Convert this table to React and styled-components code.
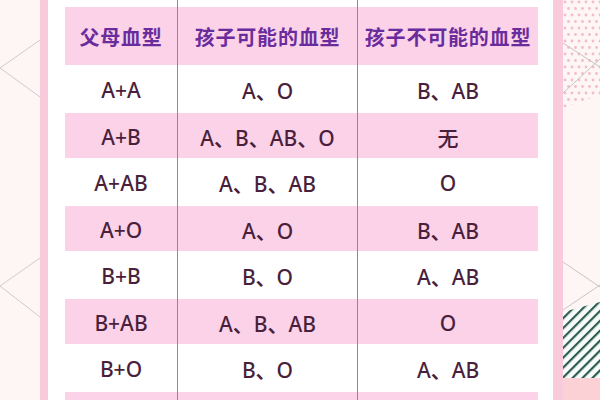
import React from "react";
import styled, { createGlobalStyle } from "styled-components";

const Global = createGlobalStyle`
  html, body { margin: 0; padding: 0; width: 600px; height: 400px; overflow: hidden; background: #fdf6f5; }
  #root { width: 600px; height: 400px; }
`;

const Page = styled.div`
  display: flex;
  width: 600px;
  height: 400px;
  overflow: hidden;
  background: #fdf6f5;
  font-family: "Noto Sans", "Noto Sans CJK SC", sans-serif;
`;

const Side = styled.div`
  flex: 0 0 ${(p) => p.$w}px;
  height: 400px;
  display: flex;
`;

const Stripe = styled.div`
  flex: 0 0 ${(p) => p.$w}px;
  background: #f9c9dc;
`;

const Panel = styled.div`
  flex: 1;
  background: #ffffff;
  padding: 0 15px 0 17px;
  overflow: hidden;
`;

const Grid = styled.div`
  display: grid;
  grid-template-columns: 112px 180px 181px;
  grid-auto-rows: auto;
`;

const Cell = styled.div`
  height: ${(p) => p.$h}px;
  display: flex;
  align-items: center;
  justify-content: center;
  background: ${(p) => (p.$pink ? "#fbd2e8" : "#ffffff")};
  border-left: ${(p) => (p.$col > 0 ? "1.5px solid #918a8d" : "none")};
  color: ${(p) => (p.$head ? "#6a2c9c" : "#4a1f3c")};
  font-size: ${(p) => (p.$head ? "20px" : "21px")};
  font-weight: ${(p) => (p.$head ? 700 : 500)};
  letter-spacing: ${(p) => (p.$head ? "0.8px" : "0")};
  white-space: nowrap;
  padding-top: ${(p) => (p.$head ? 0 : 2)}px;
  box-sizing: border-box;
`;

const rows = [
  ["A+A", "A、O", "B、AB"],
  ["A+B", "A、B、AB、O", "无"],
  ["A+AB", "A、B、AB", "O"],
  ["A+O", "A、O", "B、AB"],
  ["B+B", "B、O", "A、AB"],
  ["B+AB", "A、B、AB", "O"],
  ["B+O", "B、O", "A、AB"],
  ["", "", ""],
];

const LeftDecor = () => (
  <svg width="40" height="400" viewBox="0 0 40 400">
    <polyline points="40,40 0,68 40,97" fill="none" stroke="#cfcaca" strokeWidth="1" />
    <polyline points="40,258 0,286 40,317" fill="none" stroke="#cfcaca" strokeWidth="1" />
  </svg>
);

const RightDecor = () => (
  <svg width="37" height="400" viewBox="0 0 37 400">
    <defs>
      <pattern id="dots" width="7" height="13" patternUnits="userSpaceOnUse">
        <circle cx="2" cy="2" r="1.4" fill="#f1bccb" />
        <circle cx="5.5" cy="8.5" r="1.4" fill="#f1bccb" />
      </pattern>
      <pattern id="hatch" width="7" height="7" patternUnits="userSpaceOnUse" patternTransform="rotate(45)">
        <rect width="7" height="7" fill="#f7fbfa" />
        <rect x="0" y="0" width="2.2" height="7" fill="#2f5d50" />
      </pattern>
    </defs>
    <polygon points="0,0 37,0 37,95 0,108" fill="url(#dots)" />
    <line x1="0" y1="43" x2="37" y2="67" stroke="#c9c4c4" strokeWidth="1" />
    <line x1="0" y1="93" x2="37" y2="59" stroke="#c9c4c4" strokeWidth="1" />
    <line x1="0" y1="262" x2="37" y2="287" stroke="#c9c4c4" strokeWidth="1" />
    <line x1="0" y1="310" x2="37" y2="285" stroke="#c9c4c4" strokeWidth="1" />
    <polygon points="0,312 37,302 37,378 0,378" fill="url(#hatch)" />
    <rect x="0" y="378" width="37" height="22" fill="#fbd1d6" />
  </svg>
);

export default function App() {
  return (
    <>
      <Global />
      <Page>
        <Side $w={40}>
          <LeftDecor />
        </Side>
        <Stripe $w={8} />
        <Panel>
          <Grid>
            {[0, 1, 2].map((c) => (
              <Cell key={"s" + c} $h={7} $col={c} />
            ))}
            {["父母血型", "孩子可能的血型", "孩子不可能的血型"].map((t, c) => (
              <Cell key={"h" + c} $h={58} $col={c} $pink $head>
                {t}
              </Cell>
            ))}
            {rows.map((r, i) =>
              r.map((t, c) => (
                <Cell key={i + "-" + c} $h={i % 2 ? 45 : 48} $col={c} $pink={i % 2 === 1}>
                  {t}
                </Cell>
              ))
            )}
          </Grid>
        </Panel>
        <Stripe $w={10} />
        <Side $w={37}>
          <RightDecor />
        </Side>
      </Page>
    </>
  );
}
